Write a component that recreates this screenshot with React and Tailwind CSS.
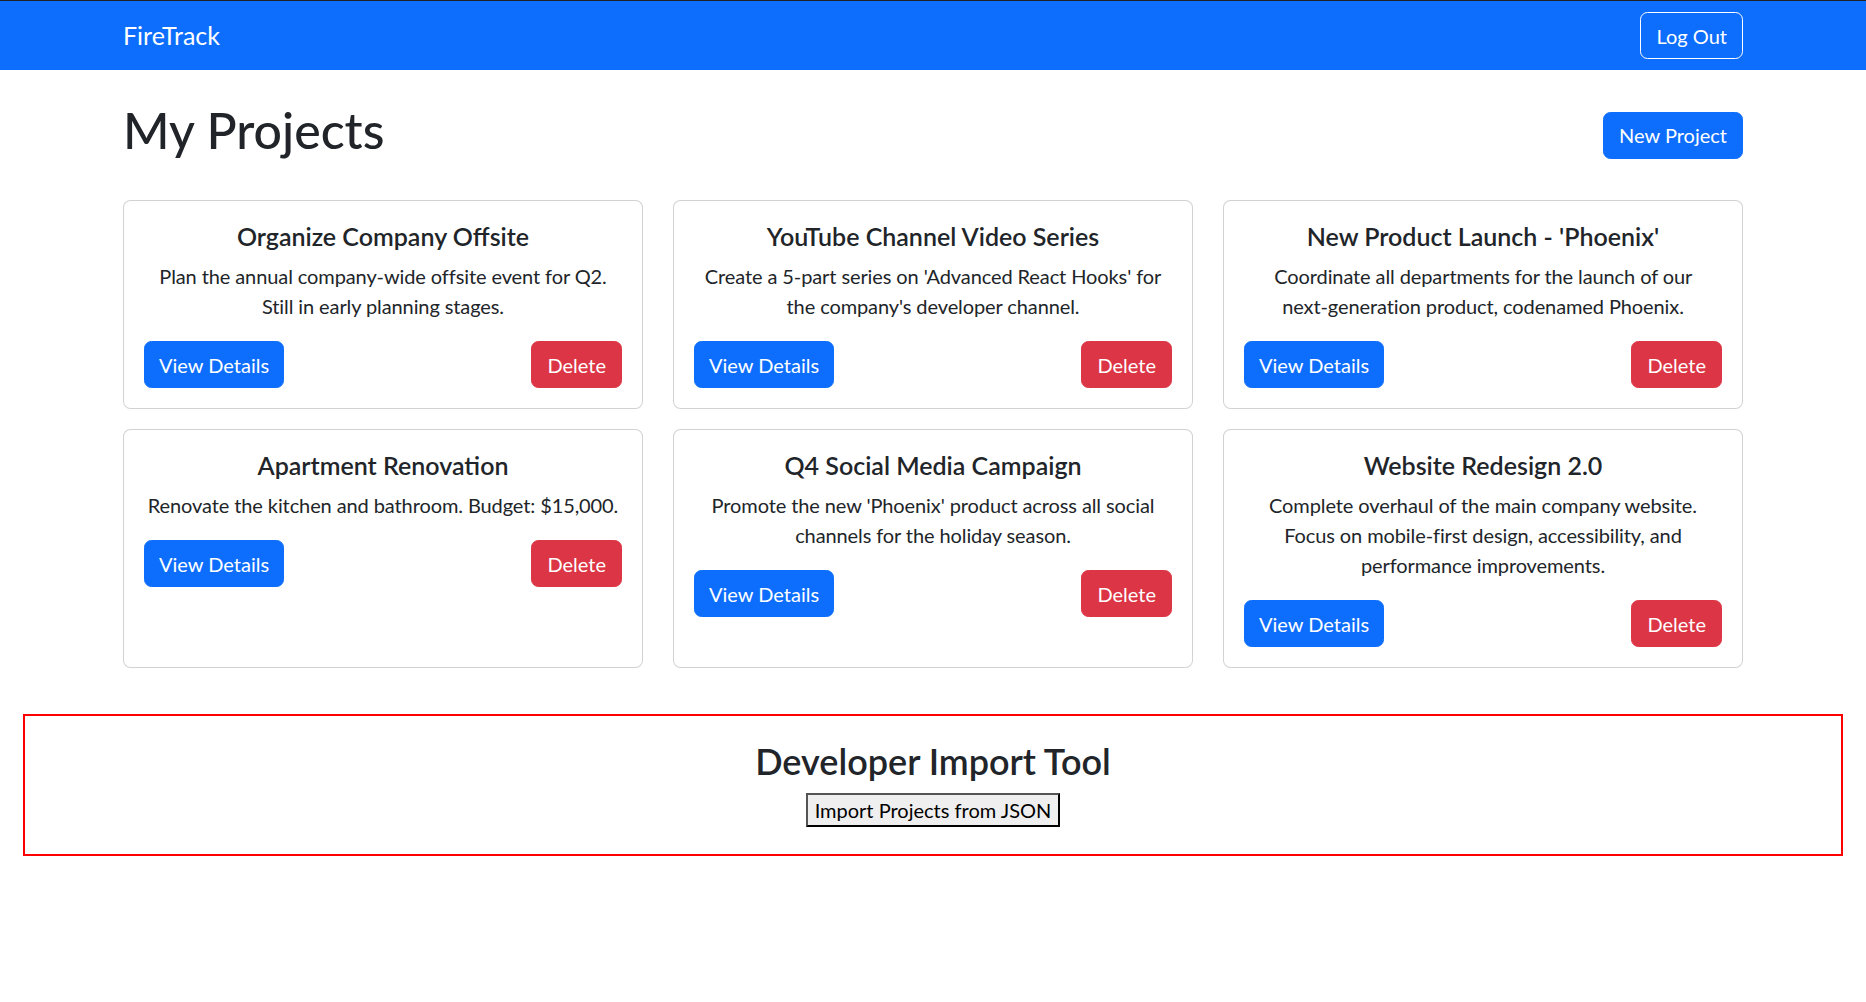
const projects = [
  {
    id: 1,
    title: 'Organize Company Offsite',
    description: 'Plan the annual company-wide offsite event for Q2. Still in early planning stages.',
  },
  {
    id: 2,
    title: 'YouTube Channel Video Series',
    description: "Create a 5-part series on 'Advanced React Hooks' for the company's developer channel.",
  },
  {
    id: 3,
    title: "New Product Launch - 'Phoenix'",
    description: (
      <>
        Coordinate all departments for the launch of our{' '}
        <span className="whitespace-nowrap">next-generation</span> product, codenamed Phoenix.
      </>
    ),
  },
  {
    id: 4,
    title: 'Apartment Renovation',
    description: 'Renovate the kitchen and bathroom. Budget: $15,000.',
  },
  {
    id: 5,
    title: 'Q4 Social Media Campaign',
    description: "Promote the new 'Phoenix' product across all social channels for the holiday season.",
  },
  {
    id: 6,
    title: 'Website Redesign 2.0',
    description: 'Complete overhaul of the main company website. Focus on mobile-first design, accessibility, and performance improvements.',
  },
]

function ProjectCard({ project }) {
  return (
    <div className="border border-[rgba(0,0,0,0.175)] rounded-[7.5px] bg-white p-[20px] text-center">
      <h5 className="text-[25px] leading-[30px] font-semibold mb-[10px]">{project.title}</h5>
      <p className="text-[20px] leading-[30px] mb-[20px] tracking-[-0.1px]">{project.description}</p>
      <div className="flex justify-between">
        <button className="bg-[#0d6efd] text-white text-[20px] leading-[30px] px-[14px] py-[7.5px] rounded-[7.5px] border border-[#0d6efd]">
          View Details
        </button>
        <button className="bg-[#dc3545] text-white text-[20px] leading-[30px] px-[15px] py-[7.5px] rounded-[7.5px] border border-[#dc3545]">
          Delete
        </button>
      </div>
    </div>
  )
}

export default function App() {
  return (
    <div className="min-h-[1002px] bg-white text-[#212529] font-['Lato','Open_Sans',sans-serif]">
      <div className="h-px bg-[#1f2226]" />
      <nav className="bg-[#0d6efd] h-[69px]">
        <div className="w-[1650px] mx-auto px-[15px] h-full flex items-center justify-between">
          <span className="text-white text-[25px]">FireTrack</span>
          <button className="text-white text-[20px] leading-[30px] px-[15px] py-[7.5px] border border-white rounded-[7.5px]">
            Log Out
          </button>
        </div>
      </nav>

      <div className="w-[1650px] mx-auto px-[15px] pt-[30px]">
        <div className="flex items-center justify-between mb-[30px]">
          <h1 className="text-[50px] leading-[60px] font-medium mb-[10px]">My Projects</h1>
          <button className="bg-[#0d6efd] text-white text-[20px] leading-[30px] px-[15px] py-[7.5px] rounded-[7.5px] border border-[#0d6efd]">
            New Project
          </button>
        </div>

        <div className="grid grid-cols-3 gap-x-[30px] gap-y-[20px]">
          {projects.map((p) => (
            <ProjectCard key={p.id} project={p} />
          ))}
        </div>
      </div>

      <div className="mx-[23px] mt-[46px] border-2 border-[#ff0000] pt-[24px] pb-[27px] text-center">
        <h2 className="text-[36px] leading-[43px] font-semibold mb-[10px]">Developer Import Tool</h2>
        <button className="bg-[#efefef] text-black text-[20px] leading-[28px] px-[7px] py-[1px] border-2 border-t-[#555] border-l-[#555] border-r-black border-b-black">
          Import Projects from JSON
        </button>
      </div>
    </div>
  )
}
